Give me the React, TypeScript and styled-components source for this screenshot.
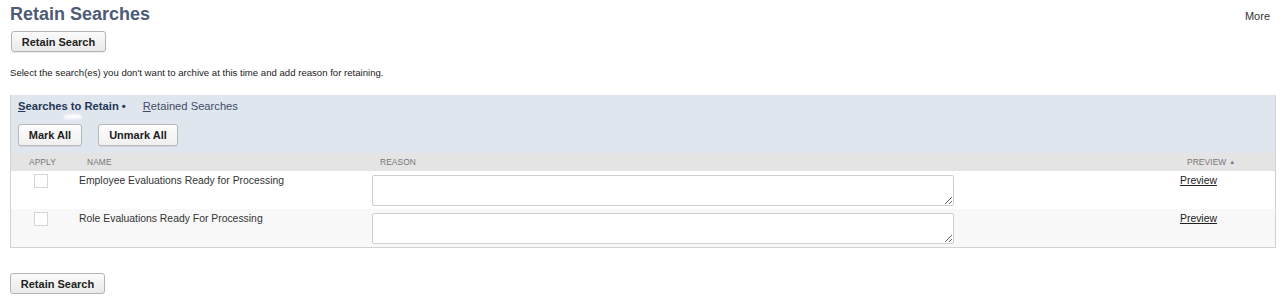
import React from 'react';
import styled, { createGlobalStyle } from 'styled-components';

const GlobalStyle = createGlobalStyle`
  body {
    margin: 0;
    background: #ffffff;
    font-family: 'Liberation Sans', Arial, sans-serif;
    color: #222;
  }
`;

const Page = styled.div`
  padding: 3px 9px 0 10px;
`;

const TitleBar = styled.div`
  display: flex;
  justify-content: space-between;
  align-items: flex-start;
`;

const Title = styled.h1`
  margin: 0;
  font-size: 18px;
  line-height: 22px;
  font-weight: bold;
  color: #4d5b76;
`;

const MoreLink = styled.span`
  font-size: 11px;
  line-height: 14px;
  margin-top: 6px;
  margin-right: 6px;
  color: #333;
`;

const Button = styled.button<{ $width: number }>`
  display: block;
  width: ${(p) => p.$width}px;
  height: 21px;
  padding: 0;
  border: 1px solid #b4b4b4;
  border-radius: 3px;
  background: linear-gradient(#fbfbfb, #e9e9e9);
  box-shadow: 0 1px 1px rgba(0, 0, 0, 0.08);
  font-family: 'Liberation Sans', Arial, sans-serif;
  font-size: 11px;
  font-weight: bold;
  color: #222;
`;

const TopButton = styled(Button)`
  margin: 6px 0 0 1px;
`;

const BottomButton = styled(Button)`
  margin-top: 25px;
`;

const Description = styled.p`
  margin: 15px 0 0;
  font-size: 9.6px;
  line-height: 12px;
  color: #222;
`;

const Panel = styled.div`
  margin-top: 16px;
  border: 1px solid #d2d2d2;
  border-top: none;
  background: #e0e6ee;
`;

const Tabs = styled.div`
  display: flex;
  align-items: center;
  gap: 17px;
  height: 21px;
  padding-left: 7px;
`;

const Tab = styled.span<{ $active?: boolean }>`
  position: relative;
  font-size: 11.2px;
  font-weight: ${(p) => (p.$active ? 'bold' : 'normal')};
  color: ${(p) => (p.$active ? '#243656' : '#3f4d68')};

  ${(p) =>
    p.$active &&
    `
    &::after {
      content: '';
      position: absolute;
      left: 46px;
      bottom: -7px;
      width: 18px;
      height: 5px;
      border-radius: 50% 50% 0 0;
      background: #ffffff;
      filter: blur(1.2px);
      opacity: 0.9;
    }
  `}
`;

const Toolbar = styled.div`
  display: flex;
  gap: 16px;
  padding: 8px 7px 8px 7px;
  height: 21px;
`;

const ToolButton = styled(Button)`
  height: 22px;
  background: linear-gradient(#fdfdfd, #f0f0f0);
  border-color: #b9b9b9;
`;

const GridRow = styled.div`
  display: grid;
  grid-template-columns: 68px 293px 808px 1fr;
`;

const HeaderRow = styled(GridRow)`
  height: 18px;
  align-items: center;
  background: #e4e4e4;
`;

const HeaderCell = styled.div<{ $pad: number }>`
  padding-left: ${(p) => p.$pad}px;
  font-size: 8.4px;
  color: #777;
  text-transform: uppercase;
  letter-spacing: 0.1px;
`;

const SortArrow = styled.span`
  font-size: 6px;
  margin-left: 3px;
  vertical-align: 1px;
`;

const DataRow = styled(GridRow)<{ $alt?: boolean }>`
  align-items: start;
  padding: 3px 0 3px;
  background: ${(p) => (p.$alt ? '#f8f8f8' : '#ffffff')};
`;

const CheckBox = styled.span`
  display: block;
  width: 12px;
  height: 12px;
  margin: 0 0 0 23px;
  border: 1px solid #d6d6d6;
  background: #fff;
`;

const NameCell = styled.div`
  font-size: 10.4px;
  line-height: 13px;
  color: #333;
`;

const Reason = styled.textarea`
  display: block;
  box-sizing: border-box;
  width: 582px;
  height: 31px;
  margin: 1px 0 0;
  border: 1px solid #cfcfcf;
  border-radius: 2px;
  background: #fff;
  font-family: 'Liberation Sans', Arial, sans-serif;
`;

const PreviewLink = styled.a`
  display: block;
  font-size: 10.4px;
  line-height: 13px;
  color: #222;
  text-decoration: underline;
`;

const searches = [
  'Employee Evaluations Ready for Processing',
  'Role Evaluations Ready For Processing',
];

export default function App() {
  return (
    <Page>
      <GlobalStyle />
      <TitleBar>
        <Title>Retain Searches</Title>
        <MoreLink>More</MoreLink>
      </TitleBar>
      <TopButton $width={95}>Retain Search</TopButton>
      <Description>
        Select the search(es) you don't want to archive at this time and add reason for retaining.
      </Description>
      <Panel>
        <Tabs>
          <Tab $active>
            <u>S</u>earches to Retain •
          </Tab>
          <Tab>
            <u>R</u>etained Searches
          </Tab>
        </Tabs>
        <Toolbar>
          <ToolButton $width={64}>Mark All</ToolButton>
          <ToolButton $width={80}>Unmark All</ToolButton>
        </Toolbar>
        <HeaderRow>
          <HeaderCell $pad={18}>Apply</HeaderCell>
          <HeaderCell $pad={8}>Name</HeaderCell>
          <HeaderCell $pad={8}>Reason</HeaderCell>
          <HeaderCell $pad={7}>
            Preview<SortArrow>▲</SortArrow>
          </HeaderCell>
        </HeaderRow>
        {searches.map((name, i) => (
          <DataRow key={'search_' + i} $alt={i % 2 === 1}>
            <CheckBox />
            <NameCell>{name}</NameCell>
            <Reason />
            <div>
              <PreviewLink href="#">Preview</PreviewLink>
            </div>
          </DataRow>
        ))}
      </Panel>
      <BottomButton $width={95}>Retain Search</BottomButton>
    </Page>
  );
}
